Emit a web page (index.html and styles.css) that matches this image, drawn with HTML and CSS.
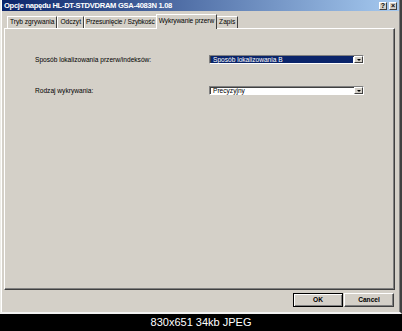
FILE: index.html
```html
<!DOCTYPE html>
<html>
<head>
<meta charset="utf-8">
<link rel="stylesheet" href="styles.css">
</head>
<body>
<div class="window">
  <div class="titlebar">
    <span class="title">Opcje napędu HL-DT-STDVDRAM GSA-4083N 1.08</span>
    <div class="tbtns">
      <span class="tbtn">?</span>
      <span class="tbtn">×</span>
    </div>
  </div>
  <div class="content">
    <div class="tabs">
      <div class="tab">Tryb zgrywania</div>
      <div class="tab">Odczyt</div>
      <div class="tab narrow">Przesunięcie / Szybkość</div>
      <div class="tab active">Wykrywanie przerw</div>
      <div class="tab">Zapis</div>
    </div>
    <div class="panel">
      <div class="label">Sposób lokalizowania przerw/indeksów:</div>
      <div class="select hl">
        <div class="select-value">Sposób lokalizowania B</div>
        <div class="drop"><span class="arrow"></span></div>
      </div>
      <div class="label">Rodzaj wykrywania:</div>
      <div class="select">
        <div class="select-value">Precyzyjny</div>
        <div class="drop"><span class="arrow"></span></div>
      </div>
    </div>
    <div class="footer">
      <div class="btn default">OK</div>
      <div class="btn">Cancel</div>
    </div>
  </div>
</div>
<div class="caption">830x651 34kb JPEG</div>
</body>
</html>
```
FILE: styles.css
```css
* { box-sizing: border-box; }
html, body { margin: 0; padding: 0; }
body {
  background: #000;
  width: 402px;
  height: 331px;
  overflow: hidden;
  font-family: "Liberation Sans", Arial, sans-serif;
}
.window {
  height: 314px;
  background: #d4d0c8;
  border-left: 1px solid #ecebe6;
  border-right: 2px solid #404040;
  border-bottom: 2px solid #f2f2f2;
  padding: 0 1px 1px 1px;
  display: flex;
  flex-direction: column;
  box-shadow: inset -1px 0 #808080, inset 1px 0 #ffffff;
}
.titlebar {
  height: 11px;
  flex: none;
  background: linear-gradient(to right, #0a246a, #a6caf0);
  display: flex;
  align-items: center;
  justify-content: space-between;
  padding: 0 2px 0 2px;
}
.title {
  color: #fff;
  font-weight: bold;
  font-size: 7.6px;
  letter-spacing: -0.3px;
  white-space: nowrap;
  line-height: 9px;
}
.tbtns { display: flex; gap: 2px; }
.tbtn {
  width: 8px;
  height: 8px;
  background: #d4d0c8;
  border: 1px solid;
  border-color: #fff #404040 #404040 #fff;
  font-size: 7px;
  font-weight: bold;
  line-height: 6px;
  text-align: center;
  color: #000;
}
.content {
  flex: 1;
  display: flex;
  flex-direction: column;
  padding: 3px 4px 0 2px;
}
.tabs {
  display: flex;
  align-items: flex-end;
  height: 14px;
  padding-left: 3px;
  flex: none;
}
.tab {
  height: 12px;
  font-size: 6.6px;
  line-height: 10px;
  padding: 0 2px;
  border-top: 1px solid #fff;
  border-left: 1px solid #fff;
  border-right: 1px solid #404040;
  white-space: nowrap;
  color: #000;
}
.tab.narrow {
  letter-spacing: -0.12px;
  padding: 0 1px;
}
.tab.active {
  height: 15px;
  margin: 0 -1px -1px -1px;
  padding: 1px 2px 0 2px;
  position: relative;
  z-index: 1;
  background: #d4d0c8;
  letter-spacing: -0.1px;
}
.panel {
  height: 262px;
  flex: none;
  border: 1px solid;
  border-color: #fff #404040 #404040 #fff;
  box-shadow: inset -1px -1px #808080;
  display: grid;
  grid-template-columns: 174px 155px;
  grid-auto-rows: 9px;
  row-gap: 22px;
  align-content: start;
  align-items: center;
  padding: 26px 0 0 30px;
}
.label {
  font-size: 6.6px;
  line-height: 8px;
  color: #000;
  white-space: nowrap;
}
.select {
  height: 9px;
  display: flex;
  background: #fff;
  border: 1px solid;
  border-color: #808080 #fff #fff #808080;
  box-shadow: inset 1px 1px #404040;
}
.select-value {
  flex: 1;
  font-size: 6.6px;
  line-height: 7px;
  padding: 0 2px;
  color: #000;
  white-space: nowrap;
  margin: 0 1px 0 1px;
}
.select.hl .select-value {
  background: #0a246a;
  color: #fff;
}
.drop {
  width: 9px;
  height: 7px;
  flex: none;
  background: #d4d0c8;
  border: 1px solid;
  border-color: #fff #404040 #404040 #fff;
  display: flex;
  align-items: center;
  justify-content: center;
}
.arrow {
  width: 0;
  height: 0;
  border-left: 2px solid transparent;
  border-right: 2px solid transparent;
  border-top: 2px solid #000;
}
.footer {
  display: flex;
  justify-content: flex-end;
  gap: 1px;
  margin-top: 3px;
  padding-right: 1px;
}
.btn {
  width: 50px;
  height: 14px;
  background: #d4d0c8;
  border: 1px solid;
  border-color: #fff #404040 #404040 #fff;
  box-shadow: inset -1px -1px #808080;
  font-size: 6.6px;
  font-weight: bold;
  line-height: 12px;
  text-align: center;
  color: #000;
}
.btn.default {
  border-color: #000;
  box-shadow: inset 1px 1px #fff, inset -1px -1px #808080;
}
.caption {
  height: 17px;
  line-height: 17px;
  color: #fff;
  font-size: 11px;
  text-align: center;
  font-family: "Liberation Sans", Arial, sans-serif;
}
```
